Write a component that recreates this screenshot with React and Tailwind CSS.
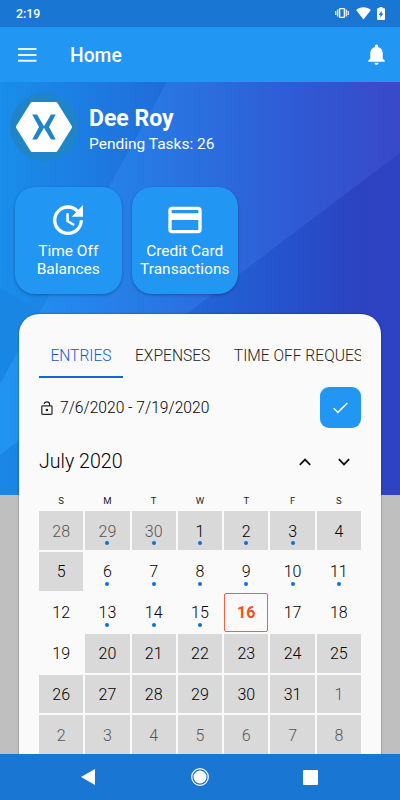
import { MdUpdate, MdCreditCard, MdNotifications } from "react-icons/md";

const weekdays = ["S", "M", "T", "W", "T", "F", "S"];

const july = Array.from({ length: 42 }, (_, i) => {
  const offset = i - 2;
  const outside = offset < 1 || offset > 31;
  const day = offset < 1 ? offset + 30 : offset > 31 ? offset - 31 : offset;
  return {
    key: i,
    day,
    outside,
    open: !outside && offset >= 6 && offset <= 19,
    today: offset === 16,
    dot: (i >= 1 && i <= 5) || (i >= 8 && i <= 13) || (i >= 15 && i <= 17),
  };
});

function StatusBar() {
  return (
    <div className="flex h-[27px] shrink-0 items-center justify-between bg-[#1976d2] pl-4 pr-[15px] text-white">
      <span className="pt-[2px] text-[12.3px] leading-none font-medium">2:19</span>
      <div className="flex items-center">
        <svg className="-mt-px" width="14" height="12" viewBox="0 0 14 12" fill="none" stroke="white">
          <rect x="4.6" y="1.6" width="4.8" height="8.8" rx="0.6" strokeWidth="1.4" />
          <path d="M2.600 2.500v7M11.400 2.500v7" strokeWidth="1.5" strokeOpacity="0.85" />
          <path d="M.7 4v4M13.300 4v4" strokeWidth="1.3" strokeOpacity="0.85" />
        </svg>
        <svg className="ml-[7px]" width="15" height="13" viewBox="0 0 15 13" fill="white">
          <path d="M.1 3.100C2.200 1.300 4.700.3 7.500.3s5.300 1 7.400 2.800L7.500 12.600z" />
        </svg>
        <svg className="ml-[6px]" width="8" height="13" viewBox="0 0 8 13">
          <path d="M2.400 0h3.200v1.300H7.200c.5 0 .8.300.8.800v10.100c0 .5-.3.800-.8.800H.8c-.5 0-.8-.3-.8-.8V2.100c0-.5.3-.8.8-.8h1.600z" fill="white" />
          <path d="M4.600 3.800 1.700 8h1.700v2.800L6.300 6.600H4.600z" fill="#1976d2" />
        </svg>
      </div>
    </div>
  );
}

function AppBar() {
  return (
    <header className="flex h-[55px] shrink-0 items-center bg-[#2196f3] pl-[18px] pr-[11px] text-white">
      <svg width="19" height="14" viewBox="0 0 19 14" stroke="white" strokeWidth="2">
        <path d="M0 1h18.500M0 7h18.500M0 12.800h18.500" strokeOpacity="0.9" />
      </svg>
      <h1 className="ml-[33px] flex-1 pt-[2px] text-[19.3px] leading-none font-medium">Home</h1>
      <MdNotifications size={25} />
    </header>
  );
}

function Backdrop() {
  return (
    <svg className="absolute inset-x-0 top-0" width="400" height="413" viewBox="0 0 400 413">
      <defs>
        <linearGradient id="base" gradientUnits="userSpaceOnUse" x1="0" y1="0" x2="400" y2="0">
          <stop offset="0" stopColor="#198eea" />
          <stop offset="0.4" stopColor="#206dda" />
          <stop offset="1" stopColor="#2b41c0" />
        </linearGradient>
        <linearGradient id="light" gradientUnits="userSpaceOnUse" x1="0" y1="0" x2="400" y2="0">
          <stop offset="0" stopColor="#2094f0" />
          <stop offset="0.3" stopColor="#267fe7" />
          <stop offset="0.5" stopColor="#2b6fdf" />
          <stop offset="0.75" stopColor="#3059d5" />
          <stop offset="1" stopColor="#3949c8" />
        </linearGradient>
        <linearGradient id="dark" gradientUnits="userSpaceOnUse" x1="0" y1="0" x2="400" y2="0">
          <stop offset="0" stopColor="#1a87e5" />
          <stop offset="0.5" stopColor="#2165d7" />
          <stop offset="0.75" stopColor="#274fcb" />
          <stop offset="0.9" stopColor="#2c42c1" />
          <stop offset="1" stopColor="#2e43c4" />
        </linearGradient>
      </defs>
      <rect width="400" height="413" fill="url(#base)" />
      <path d="M0 206L41 230L0 304z" fill="#1a86e4" />
      <path d="M167 0H400V71L0 373V302z" fill="url(#light)" />
      <path d="M400 71V413H0V373z" fill="url(#dark)" />
    </svg>
  );
}

function Profile() {
  return (
    <div className="flex items-center pt-[11px] pl-[10px] text-white">
      <div className="flex size-[68px] items-center justify-center rounded-full bg-[#2084c9]">
        <svg width="56" height="50" viewBox="0 0 56 50">
          <path
            d="M16.500 2.500h23L53.500 25l-14 22.500h-23L2.500 25z"
            fill="white"
            stroke="white"
            strokeWidth="5"
            strokeLinejoin="round"
          />
          <path
            d="M16.200 12.500h4.800L28 24.300l7-11.800h4.800L33 25l6.800 12.500H35L28 25.700l-7 11.800h-4.800L23 25z"
            fill="#2084c9"
          />
        </svg>
      </div>
      <div className="mt-[6px] ml-[11px]">
        <div className="text-[23px] leading-[27px] font-bold">Dee Roy</div>
        <div className="text-[15.5px] leading-6">Pending Tasks: 26</div>
      </div>
    </div>
  );
}

function ActionTile({ icon: Icon, lines }) {
  return (
    <button className="flex h-[107px] w-[106.5px] flex-col items-center rounded-[20px] bg-[#2196f3] pt-[13px] text-[15.5px] leading-[18px] text-white shadow-[0_1px_3px_rgba(0,0,0,0.3)]">
      <Icon size={40} />
      <span className="mt-[2px] block">{lines[0]}</span>
      <span className="block">{lines[1]}</span>
    </button>
  );
}

function Day({ day, outside, open, today, dot }) {
  return (
    <div
      className={`flex h-[38.9px] flex-col items-center text-base leading-[22px] ${
        today
          ? "rounded-[2px] border border-[#f0623f] bg-[#fafafa] pt-[8px] font-bold text-[#f4511e]"
          : open
            ? "bg-[#fafafa] pt-[9px] font-light"
            : "bg-[#d9d9d9] pt-[9px] font-light"
      } ${outside ? "text-[#555]" : today ? "" : "text-black"}`}
    >
      <span className="mt-[0.6px]">{day}</span>
      {dot && <span className="mt-[-1.5px] size-1 rounded-full bg-[#0b6fdc]" />}
    </div>
  );
}

function Calendar() {
  return (
    <>
      <div className="mt-[23px] flex h-[22px] items-center">
        <h2 className="flex-1 text-[19.6px] leading-none font-light text-black">July 2020</h2>
        <svg width="12" height="8" viewBox="0 0 12 8" fill="none" stroke="#111" strokeWidth="1.8">
          <path d="M.8 6.800 6 1.600l5.200 5.200" />
        </svg>
        <svg className="mr-[11px] ml-[27px]" width="12" height="8" viewBox="0 0 12 8" fill="none" stroke="#111" strokeWidth="1.8">
          <path d="M.8 1.200 6 6.400l5.200-5.200" />
        </svg>
      </div>
      <div className="mt-[22px] grid grid-cols-7 gap-x-[2px] text-center text-[9.5px] leading-[12px] text-[#222]">
        {weekdays.map((d, i) => (
          <span key={i}>{d}</span>
        ))}
      </div>
      <div className="mt-[4px] grid grid-cols-7 gap-[2px]">
        {july.map(({ key, ...d }) => (
          <Day key={key} {...d} />
        ))}
      </div>
    </>
  );
}

function TimesheetCard() {
  return (
    <section className="mx-[19px] mt-5 h-[480px] rounded-t-[20px] bg-[#fafafa] px-5 pt-[21px] shadow-[0_0_2px_rgba(0,0,60,0.5)]">
      <nav className="flex h-[43px] overflow-hidden text-[15.6px] leading-[43px] font-light whitespace-nowrap text-[#222]">
        <span className="w-[84px] shrink-0 border-b-2 border-[#1565d8] text-center text-[#1159d0]">ENTRIES</span>
        <span className="ml-3 shrink-0">EXPENSES</span>
        <span className="ml-[23.5px] shrink-0">TIME OFF REQUESTS</span>
      </nav>
      <div className="mt-[9px] flex items-center">
        <svg className="ml-[2px]" width="12" height="14" viewBox="0 0 12 14" fill="none" stroke="#222" strokeWidth="1.2">
          <rect x="0.8" y="4.8" width="10.2" height="8.5" rx="0.8" />
          <path d="M3.200 3C3.400 1.600 4.500.8 5.900.8c1.600 0 2.700 1.100 2.700 2.600v1.400" />
          <circle cx="5.9" cy="9" r="1.3" fill="#222" stroke="none" />
        </svg>
        <span className="ml-[7px] flex-1 pt-[2px] text-[15.6px] leading-none font-light text-black">7/6/2020 - 7/19/2020</span>
        <button className="flex size-[41px] items-center justify-center rounded-[9px] bg-[#2196f3]">
          <svg width="15" height="12" viewBox="0 0 15 12" fill="none" stroke="white" strokeWidth="1.5">
            <path d="M.7 6.200 4.900 10.400 14.300 1" />
          </svg>
        </button>
      </div>
      <Calendar />
    </section>
  );
}

function NavBar() {
  return (
    <div className="flex h-[46px] shrink-0 items-center justify-between bg-[#1976d2] pr-[82px] pl-[81px]">
      <svg width="14" height="16" viewBox="0 0 14 16">
        <path d="M0 8 14 0v16z" fill="white" />
      </svg>
      <svg width="18" height="18" viewBox="0 0 18 18" className="mr-[-2px]">
        <circle cx="9" cy="9" r="8.3" fill="none" stroke="white" strokeWidth="1.2" />
        <circle cx="9" cy="9" r="6.5" fill="white" />
      </svg>
      <span className="size-[15px] rounded-[1px] bg-white" />
    </div>
  );
}

export default function App() {
  return (
    <div className="flex h-[800px] w-[400px] flex-col overflow-hidden font-[Roboto,sans-serif]">
      <StatusBar />
      <AppBar />
      <main className="relative flex-1 overflow-hidden bg-[#bfbfbf]">
        <Backdrop />
        <div className="relative">
          <Profile />
          <div className="mt-[26px] flex gap-[10px] pl-[15px]">
            <ActionTile icon={MdUpdate} lines={["Time Off", "Balances"]} />
            <ActionTile icon={MdCreditCard} lines={["Credit Card", "Transactions"]} />
          </div>
          <TimesheetCard />
        </div>
      </main>
      <NavBar />
    </div>
  );
}
